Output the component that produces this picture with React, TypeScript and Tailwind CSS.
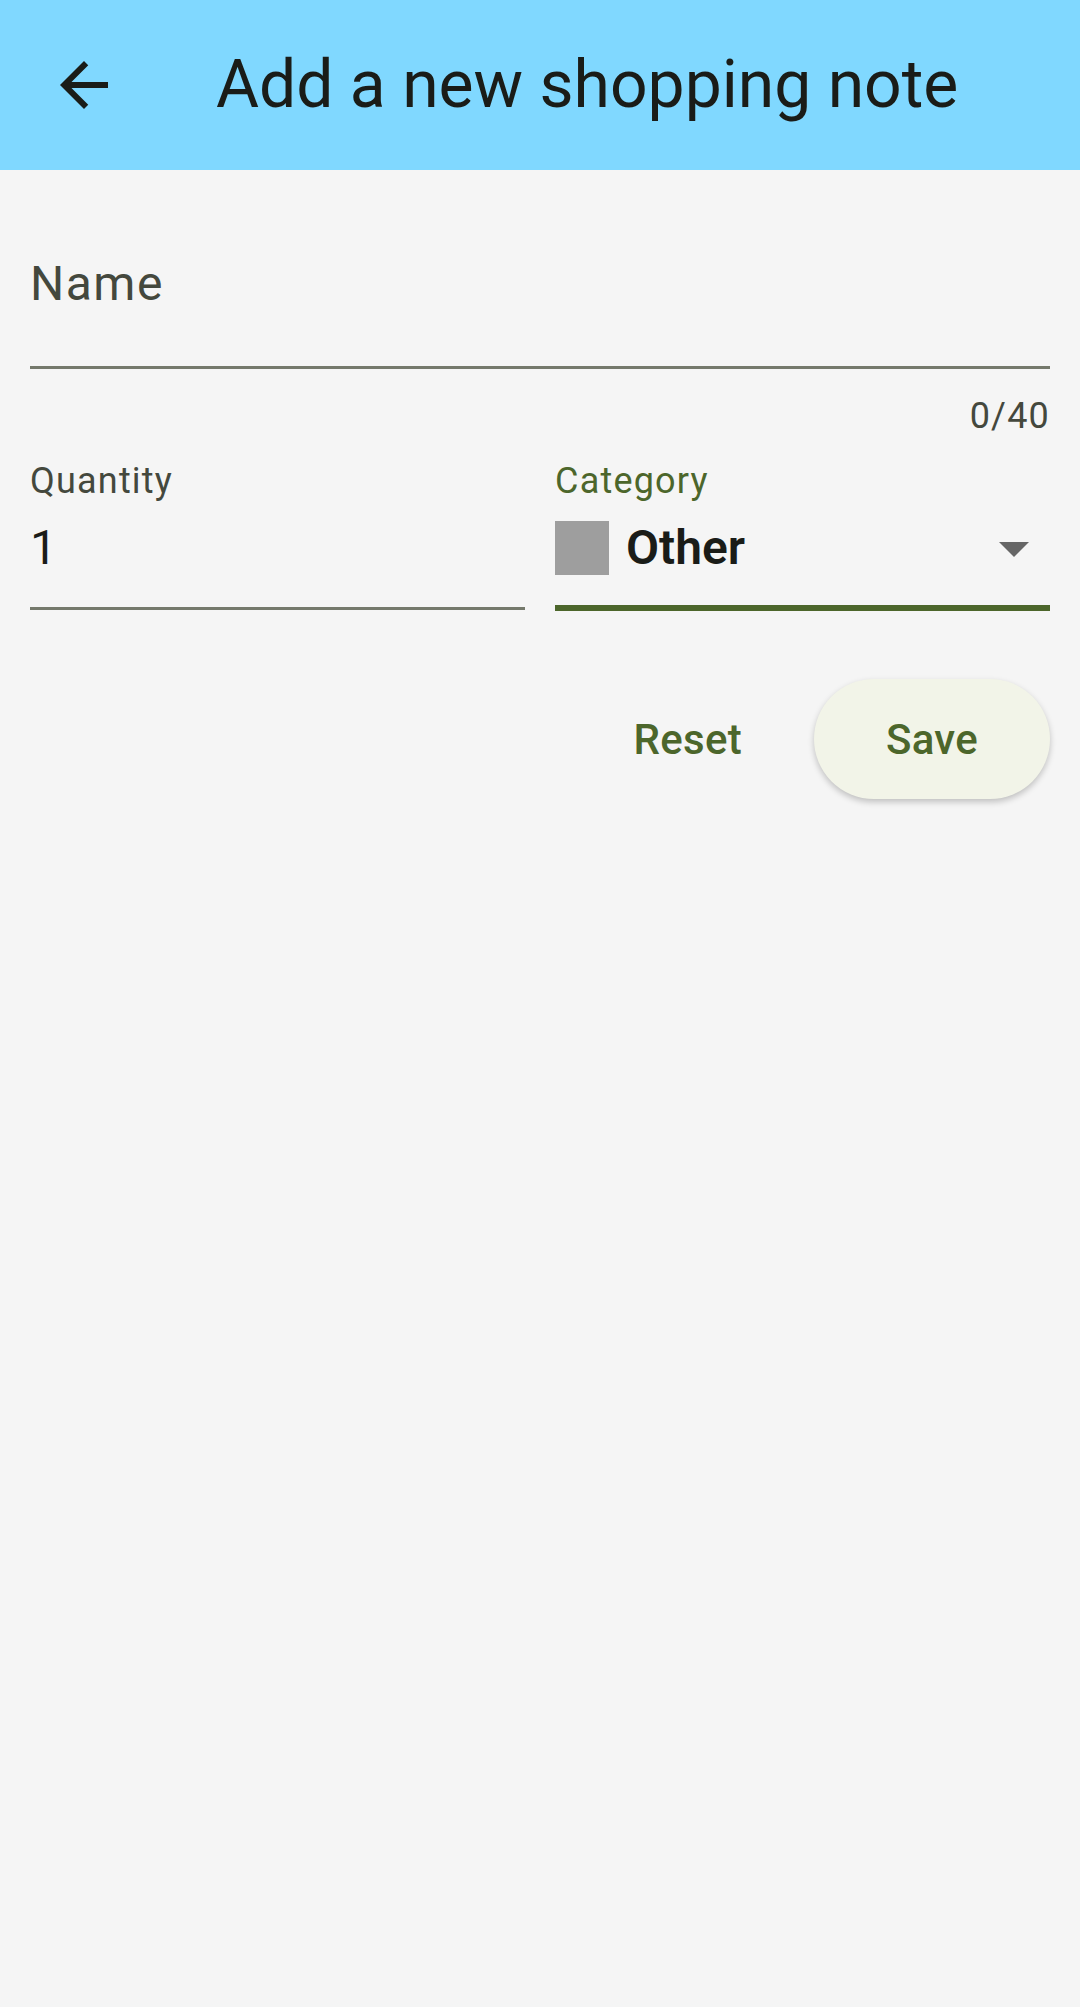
import React from "react";

export default function App() {
  return (
    <div
      className="min-h-[2007px] w-[1080px] bg-[#f5f5f5]"
      style={{ fontFamily: "Roboto, 'Noto Sans', sans-serif" }}
    >
      {/* App bar */}
      <div className="flex h-[170px] items-center bg-[#80d8ff]">
        <div className="flex w-[168px] items-center justify-center">
          <svg width="72" height="72" viewBox="0 0 24 24" fill="#1a1c18">
            <path d="M20 11H7.83l5.59-5.59L12 4l-8 8 8 8 1.41-1.41L7.83 13H20v-2z" />
          </svg>
        </div>
        <div className="ml-[48px] text-[66px] leading-[66px] text-[#1a1c18]">
          Add a new shopping note
        </div>
      </div>

      {/* Form */}
      <div className="px-[30px]">
        {/* Name */}
        <div className="pt-[90px]">
          <div className="text-[48px] leading-[48px] tracking-[1.5px] text-[#44483d]">
            Name
          </div>
          <div className="mt-[58px] h-[3px] bg-[#75796c]" />
          <div className="mt-[29px] text-right text-[36px] leading-[36px] tracking-[1.2px] text-[#44483d]">
            0/40
          </div>
        </div>

        {/* Quantity & Category */}
        <div className="mt-[29px] flex gap-[30px]">
          <div className="flex-1">
            <div className="text-[36px] leading-[36px] tracking-[1.2px] text-[#44483d]">
              Quantity
            </div>
            <div className="mt-[22px] flex h-[54px] items-center">
              <span className="text-[48px] leading-[48px] tracking-[1.5px] text-[#1a1c18]">
                1
              </span>
            </div>
            <div className="flex h-[36px] items-center pt-[31px]">
              <div className="h-[3px] w-full bg-[#75796c]" />
            </div>
          </div>
          <div className="flex-1">
            <div className="text-[36px] leading-[36px] tracking-[1.2px] text-[#4c662b]">
              Category
            </div>
            <div className="mt-[22px] flex h-[54px] items-center">
              <div className="h-[54px] w-[54px] bg-[#9e9e9e]" />
              <span className="ml-[17px] flex-1 text-[48px] font-semibold leading-[48px] text-[#1a1c18]">
                Other
              </span>
              <svg width="72" height="72" viewBox="0 0 24 24" fill="#666666">
                <path d="M7 10l5 5 5-5z" />
              </svg>
            </div>
            <div className="pt-[30px]">
              <div className="h-[6px] w-full bg-[#4c662b]" />
            </div>
          </div>
        </div>

        {/* Buttons */}
        <div className="mt-[68px] flex justify-end gap-[36px]">
          <button className="flex h-[120px] items-center px-[36px] text-[42px] font-medium tracking-[0.3px] text-[#4c662b]">
            Reset
          </button>
          <button className="flex h-[120px] items-center rounded-full bg-[#f2f4e8] px-[72px] text-[42px] font-medium tracking-[0.3px] text-[#4c662b] shadow-[0_3px_6px_rgba(0,0,0,0.22)]">
            Save
          </button>
        </div>
      </div>
    </div>
  );
}
